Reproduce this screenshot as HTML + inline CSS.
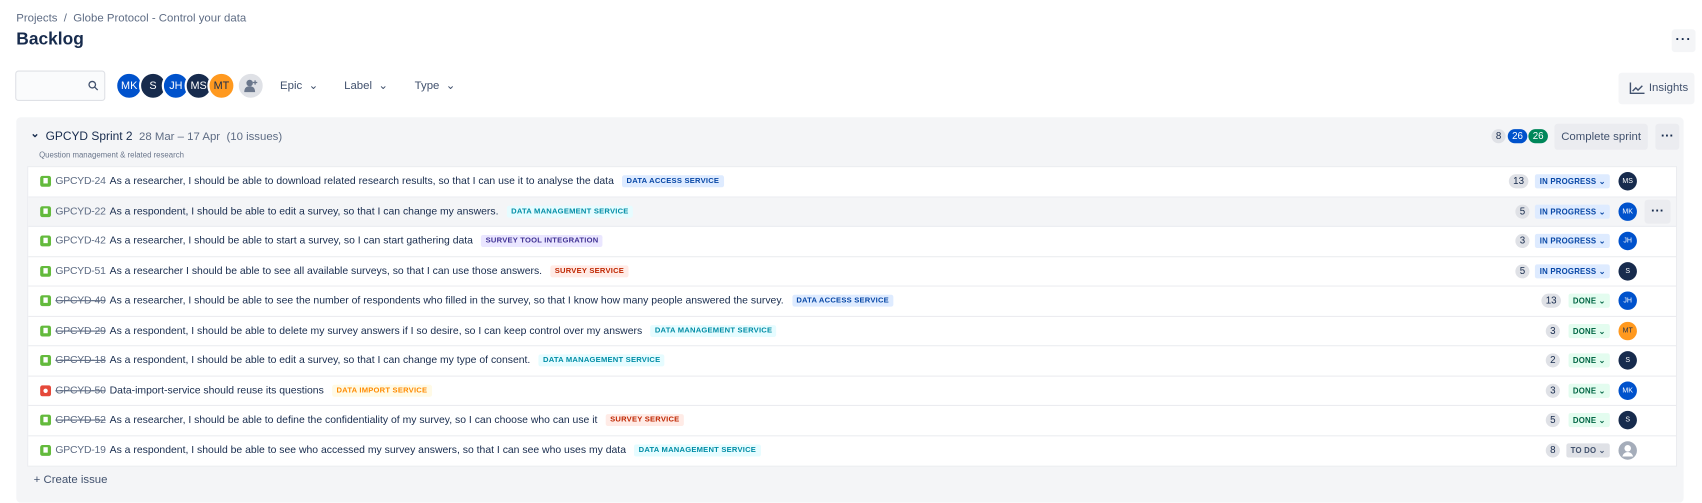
<!DOCTYPE html>
<html><head><meta charset="utf-8"><style>
*{box-sizing:border-box;margin:0;padding:0}
html,body{width:1702px;height:503px;overflow:hidden;background:#fff}
body{font-family:"Liberation Sans",sans-serif;color:#172b4d;position:relative}
#w{position:absolute;left:0;top:0;width:1568px;height:464px;transform:scale(1.0855);transform-origin:0 0}
.abs{position:absolute}
.crumb{left:15px;top:11px;font-size:10.5px;color:#5e6c84}
h1{position:absolute;left:15px;top:28px;font-size:16px;font-weight:600;color:#172b4d}
.topdots{left:1540px;top:27px;width:22px;height:21px;background:#f4f5f7;border-radius:3px;font-size:12px;text-align:center;line-height:19px;font-weight:bold;letter-spacing:1px}
.search{left:14px;top:65px;width:83px;height:28px;border:1px solid #dfe1e6;border-radius:3px;background:#fafbfc}
.av{position:absolute;border-radius:50%;color:#fff;font-size:10px;display:flex;align-items:center;justify-content:center;border:2px solid #fff}
.filt{top:73px;font-size:10.5px;color:#42526e}
.insights{left:1491px;top:67px;width:70px;height:29px;background:#f4f5f7;border-radius:3px;font-size:10.5px;color:#42526e;line-height:29px;padding-left:28px}
.sprint{left:15px;top:108px;width:1536px;height:355px;background:#f4f5f7;border-radius:4px}
.list{left:25px;top:153px;width:1520px;height:277px;background:#fff;border:1px solid #ebecf0}
.row{position:absolute;left:0;width:1518px;height:27.5px;border-bottom:1px solid #ebecf0;font-size:9.6px}
.row:last-child{border-bottom:none}
.row>*{top:50%;transform:translateY(-50%)}
.ic{position:absolute;left:11px;width:10px;height:10px;border-radius:2px;background:#63ba3c}
.ic:after{content:"";position:absolute;left:3px;top:2px;width:4px;height:5px;background:#fff}
.ic.bug{background:#e5493a}
.ic.bug:after{left:3px;top:3px;width:4px;height:4px;border-radius:50%}
.key{position:absolute;left:25px;color:#5e6c84;font-size:9.6px;letter-spacing:-.2px}
.key.s{text-decoration:line-through}
.sum{position:absolute;left:75px;white-space:nowrap;color:#172b4d}
.lab{display:inline-block;font-size:7px;font-weight:bold;padding:2px 4px;border-radius:2px;margin-left:5px;vertical-align:1px;letter-spacing:.2px}
.acc{background:#deebff;color:#0747a6}
.mgm{background:#e6fcff;color:#008da6}
.tool{background:#eae6ff;color:#403294}
.srv{background:#ffebe6;color:#bf2600}
.imp{background:#fffae6;color:#ff8b00}
.pts{position:absolute;background:#dfe1e6;border-radius:8px;font-size:9px;color:#172b4d;height:13px;line-height:13px;padding:0 4px;text-align:center}
.st{position:absolute;right:61px;font-size:7.2px;font-weight:bold;padding:2px 4px;border-radius:2px;letter-spacing:.2px}
.ip{background:#deebff;color:#0747a6}
.dn{background:#e3fcef;color:#006644}
.td{background:#dfe1e6;color:#42526e}
.ra{position:absolute;left:1465px;width:17px;height:17px;border-radius:50%;color:#fff;font-size:6.5px;display:flex;align-items:center;justify-content:center}
</style></head><body><div id="w">
<div class="abs crumb">Projects &nbsp;/&nbsp; Globe Protocol - Control your data</div>
<h1>Backlog</h1>
<div class="abs topdots">···</div>
<div class="abs search"><svg class="abs" style="left:66px;top:8px" width="10" height="10" viewBox="0 0 10 10"><circle cx="4" cy="4" r="3" fill="none" stroke="#42526e" stroke-width="1.2"/><path d="M6.3 6.3L9 9" stroke="#42526e" stroke-width="1.2"/></svg></div>
<div class="av" style="left:106px;top:66px;width:26px;height:26px;background:#0052cc">MK</div>
<div class="av" style="left:128px;top:66px;width:26px;height:26px;background:#172b4d">S</div>
<div class="av" style="left:149px;top:66px;width:26px;height:26px;background:#0052cc">JH</div>
<div class="av" style="left:170px;top:66px;width:26px;height:26px;background:#172b4d">MS</div>
<div class="av" style="left:191px;top:66px;width:26px;height:26px;background:#ff991f;color:#172b4d">MT</div>
<div class="av" style="left:218px;top:66px;width:26px;height:26px;background:#dfe1e6"><svg width="14" height="12" viewBox="0 0 14 12"><circle cx="6" cy="3.5" r="3" fill="#6b778c"/><path d="M1 12c0-4 2-5.5 5-5.5s5 1.5 5 5.5z" fill="#6b778c"/><path d="M11 1v4M9 3h4" stroke="#6b778c" stroke-width="1.2"/></svg></div>
<div class="abs filt" style="left:258px">Epic &nbsp;⌄</div>
<div class="abs filt" style="left:317px">Label &nbsp;⌄</div>
<div class="abs filt" style="left:382px">Type &nbsp;⌄</div>
<div class="abs insights"><svg class="abs" style="left:10px;top:9px" width="14" height="11" viewBox="0 0 14 11"><path d="M1 0v10h13" fill="none" stroke="#42526e" stroke-width="1.3"/><path d="M3 8l3-3 2 2 4-4" fill="none" stroke="#42526e" stroke-width="1.3"/></svg>Insights</div>
<div class="abs sprint"></div>
<div class="abs" style="left:28px;top:118px;font-size:10px;font-weight:bold">⌄</div>
<div class="abs" style="left:42px;top:120px;font-size:11px;white-space:nowrap">GPCYD Sprint 2 <span style="color:#5e6c84;font-size:10.5px">&nbsp;28 Mar – 17 Apr &nbsp;(10 issues)</span></div>
<div class="abs" style="left:36px;top:138px;font-size:7.2px;color:#6b778c">Question management &amp; related research</div>
<div class="abs pts" style="left:1374px;top:119px;font-size:9px">8</div>
<div class="abs pts" style="left:1389px;top:119px;background:#0052cc;color:#fff;font-size:9px">26</div>
<div class="abs pts" style="left:1408px;top:119px;background:#00875a;color:#fff;font-size:9px">26</div>
<div class="abs" style="left:1432px;top:114px;width:86px;height:24px;background:#ebecf0;border-radius:3px;font-size:10.5px;color:#42526e;line-height:24px;text-align:center">Complete sprint</div>
<div class="abs" style="left:1525px;top:114px;width:22px;height:24px;background:#ebecf0;border-radius:3px;font-size:12px;font-weight:bold;text-align:center;line-height:22px">···</div>
<div class="abs list">
<div class="row" style="top:0"><i class="ic"></i><span class="key">GPCYD-24</span><span class="sum">As a researcher, I should be able to download related research results, so that I can use it to analyse the data <span class="lab acc">DATA ACCESS SERVICE</span></span><span class="pts" style="left:1364px">13</span><span class="st ip">IN PROGRESS ⌄</span><span class="ra" style="background:#172b4d">MS</span></div>
<div class="row" style="top:27.5px;background:#f4f5f7"><i class="ic"></i><span class="key">GPCYD-22</span><span class="sum">As a respondent, I should be able to edit a survey, so that I can change my answers. <span class="lab mgm">DATA MANAGEMENT SERVICE</span></span><span class="pts" style="left:1370px">5</span><span class="st ip">IN PROGRESS ⌄</span><span class="ra" style="background:#0052cc">MK</span><span class="abs" style="left:1489px;width:24px;height:22px;background:#ebecf0;border-radius:3px;text-align:center;font-weight:bold;font-size:12px;line-height:20px">···</span></div>
<div class="row" style="top:55px"><i class="ic"></i><span class="key">GPCYD-42</span><span class="sum">As a researcher, I should be able to start a survey, so I can start gathering data <span class="lab tool">SURVEY TOOL INTEGRATION</span></span><span class="pts" style="left:1370px">3</span><span class="st ip">IN PROGRESS ⌄</span><span class="ra" style="background:#0052cc">JH</span></div>
<div class="row" style="top:82.5px"><i class="ic"></i><span class="key">GPCYD-51</span><span class="sum">As a researcher I should be able to see all available surveys, so that I can use those answers. <span class="lab srv">SURVEY SERVICE</span></span><span class="pts" style="left:1370px">5</span><span class="st ip">IN PROGRESS ⌄</span><span class="ra" style="background:#172b4d">S</span></div>
<div class="row" style="top:110px"><i class="ic"></i><span class="key s">GPCYD-49</span><span class="sum">As a researcher, I should be able to see the number of respondents who filled in the survey, so that I know how many people answered the survey. <span class="lab acc">DATA ACCESS SERVICE</span></span><span class="pts" style="left:1394px">13</span><span class="st dn">DONE ⌄</span><span class="ra" style="background:#0052cc">JH</span></div>
<div class="row" style="top:137.5px"><i class="ic"></i><span class="key s">GPCYD-29</span><span class="sum">As a respondent, I should be able to delete my survey answers if I so desire, so I can keep control over my answers <span class="lab mgm">DATA MANAGEMENT SERVICE</span></span><span class="pts" style="left:1398px">3</span><span class="st dn">DONE ⌄</span><span class="ra" style="background:#ff991f;color:#172b4d">MT</span></div>
<div class="row" style="top:165px"><i class="ic"></i><span class="key s">GPCYD-18</span><span class="sum">As a respondent, I should be able to edit a survey, so that I can change my type of consent. <span class="lab mgm">DATA MANAGEMENT SERVICE</span></span><span class="pts" style="left:1398px">2</span><span class="st dn">DONE ⌄</span><span class="ra" style="background:#172b4d">S</span></div>
<div class="row" style="top:192.5px"><i class="ic bug"></i><span class="key s">GPCYD-50</span><span class="sum">Data-import-service should reuse its questions <span class="lab imp">DATA IMPORT SERVICE</span></span><span class="pts" style="left:1398px">3</span><span class="st dn">DONE ⌄</span><span class="ra" style="background:#0052cc">MK</span></div>
<div class="row" style="top:220px"><i class="ic"></i><span class="key s">GPCYD-52</span><span class="sum">As a researcher, I should be able to define the confidentiality of my survey, so I can choose who can use it <span class="lab srv">SURVEY SERVICE</span></span><span class="pts" style="left:1398px">5</span><span class="st dn">DONE ⌄</span><span class="ra" style="background:#172b4d">S</span></div>
<div class="row" style="top:247.5px"><i class="ic"></i><span class="key">GPCYD-19</span><span class="sum">As a respondent, I should be able to see who accessed my survey answers, so that I can see who uses my data <span class="lab mgm">DATA MANAGEMENT SERVICE</span></span><span class="pts" style="left:1398px">8</span><span class="st td">TO DO ⌄</span><span class="ra" style="background:#a5adba"><svg width="17" height="17" viewBox="0 0 17 17"><circle cx="8.5" cy="6.5" r="3" fill="#fff"/><path d="M3.5 14c1-3 3-4 5-4s4 1 5 4" fill="#fff"/></svg></span></div>
</div>
<div class="abs" style="left:31px;top:436px;font-size:10.5px;color:#42526e">+ Create issue</div>
</div></body></html>
